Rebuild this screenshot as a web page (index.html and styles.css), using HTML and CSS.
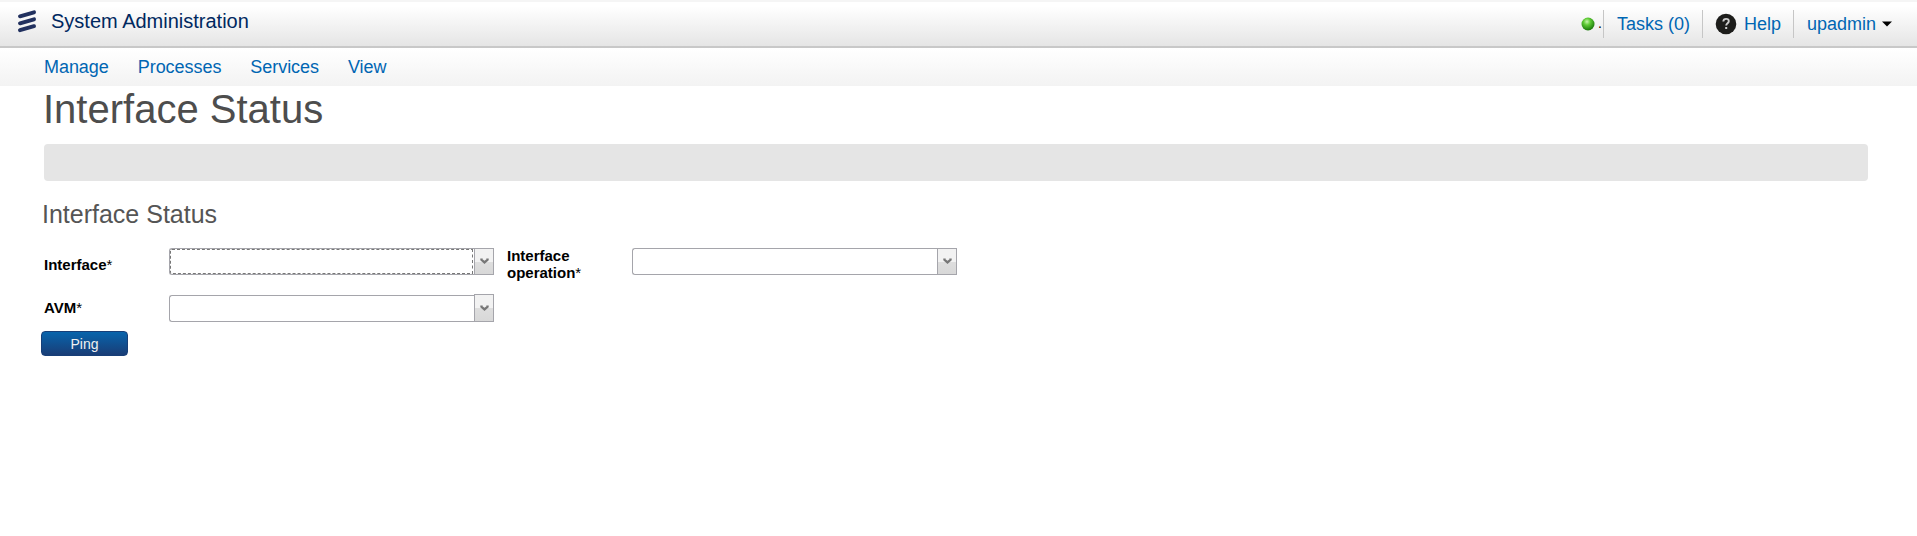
FILE: index.html
```html
<!DOCTYPE html>
<html lang="en">
<head>
<meta charset="utf-8">
<title>System Administration</title>
<link rel="stylesheet" href="styles.css">
</head>
<body>
<header class="topbar">
  <svg class="logo" width="20" height="24" viewBox="0 0 20 24"><g stroke="#22315f" stroke-width="4" stroke-linecap="round"><path d="M3 7.300 17 3.300"/><path d="M3 14.300 17 10.300"/><path d="M3 21.200 17 17.200"/></g></svg>
  <div class="brand">System Administration</div>
  <div class="tools">
    <div class="status">
      <svg width="14" height="14" viewBox="0 0 14 14"><defs><radialGradient id="led" cx=".42" cy=".32" r=".65"><stop offset="0" stop-color="#c9f5ae"/><stop offset=".4" stop-color="#5fcb35"/><stop offset="1" stop-color="#1d7d0c"/></radialGradient></defs><circle cx="7" cy="7" r="6.5" fill="url(#led)"/></svg>
      <span class="dot">.</span>
    </div>
    <a class="tool tasks">Tasks (0)</a>
    <a class="tool help"><svg width="22" height="22" viewBox="0 0 22 22"><circle cx="11" cy="11" r="10.3" fill="#1d1d1b"/><path d="M8.300 8.500c.1-1.700 1.200-2.600 2.800-2.600 1.600 0 2.700.9 2.700 2.300 0 2-2.600 2-2.600 4.300" fill="none" stroke="#ccc" stroke-width="1.900"/><rect x="10.200" y="14" width="2" height="2" fill="#ccc"/></svg><span>Help</span></a>
    <a class="tool user"><span>upadmin</span><svg width="10" height="6" viewBox="0 0 10 6"><path d="M0 .5h10L5 5.500z"/></svg></a>
  </div>
</header>
<nav class="menu"><a>Manage</a><a>Processes</a><a>Services</a><a>View</a></nav>
<main class="content">
  <h1 class="title">Interface Status</h1>
  <div class="message-bar"></div>
  <h2 class="subtitle">Interface Status</h2>
  <form class="form">
    <div class="label label-interface">Interface<span class="required">*</span></div>
    <div class="select focused"><div class="field"></div><div class="arrow"><svg width="9" height="7" viewBox="0 0 9 7"><path d="M1.500.5v1.300l3 2.700 3-2.700V.5" fill="none" stroke="#777" stroke-width="2.400"/></svg></div></div>
    <div class="label label-operation">Interface<br>operation<span class="required">*</span></div>
    <div class="select"><div class="field"></div><div class="arrow"><svg width="9" height="7" viewBox="0 0 9 7"><path d="M1.500.5v1.300l3 2.700 3-2.700V.5" fill="none" stroke="#777" stroke-width="2.400"/></svg></div></div>
    <div class="label label-avm">AVM<span class="required">*</span></div>
    <div class="select avm"><div class="field"></div><div class="arrow"><svg width="9" height="7" viewBox="0 0 9 7"><path d="M1.500.5v1.300l3 2.700 3-2.700V.5" fill="none" stroke="#777" stroke-width="2.400"/></svg></div></div>
  </form>
  <button class="ping">Ping</button>
</main>
</body>
</html>
```
FILE: styles.css
```css
* { box-sizing: border-box; }
body {
  margin: 0;
  background: #fff;
  font-family: "Liberation Sans", Arial, sans-serif;
}
svg { display: block; flex: none; }
.topbar {
  height: 48px;
  display: flex;
  align-items: flex-start;
  border-top: 2px solid #f5f5f5;
  border-bottom: 2px solid #c8c8c8;
  background: linear-gradient(#fff 10%, #e5e5e5);
  padding-left: 17px;
}
.logo { margin-top: 7px; }
.brand {
  margin: 7px 0 0 14px;
  font-size: 20px;
  line-height: 24px;
  color: #00285f;
}
.tools {
  display: flex;
  margin: 8px 0 0 auto;
  padding-right: 25px;
  height: 28px;
  font-size: 18px;
  line-height: 28px;
  color: #0066b3;
}
.status { display: flex; align-items: center; width: 22px; }
.dot { margin: -2px 0 0 3px; font-size: 14px; color: #000; }
.tool { display: flex; align-items: center; border-left: 1px solid #c6c6c6; }
.tasks { width: 99px; padding-left: 13px; }
.help { width: 91px; padding-left: 12px; }
.help span { margin-left: 7px; }
.user { width: 99px; padding-left: 13px; }
.user svg { margin-left: 6px; }
.menu {
  display: flex;
  gap: 29px;
  height: 38px;
  padding-left: 44px;
  background: linear-gradient(#fff, #f3f3f3);
  font-size: 18px;
  line-height: 38px;
  letter-spacing: -0.05px;
  color: #0066b3;
}
.content { padding: 0 49px 0 41px; }
.title {
  margin: 0;
  padding-left: 2px;
  height: 58px;
  font-size: 40px;
  line-height: 46px;
  font-weight: 400;
  color: #4d4d4d;
}
.message-bar {
  height: 37px;
  margin-left: 3px;
  border-radius: 4px;
  background: #e5e5e5;
}
.subtitle {
  margin: 18px 0 0;
  padding-left: 1px;
  height: 49px;
  font-size: 25px;
  line-height: 30px;
  font-weight: 400;
  color: #555;
}
.form {
  display: grid;
  grid-template-columns: 125px 325px 13px 125px 325px;
  grid-template-rows: 46px 37px;
  padding-left: 3px;
}
.label {
  font-size: 15px;
  line-height: 17px;
  font-weight: 700;
  color: #000;
}
.label-interface { padding-top: 8px; }
.label-operation { grid-column: 4; margin-top: -1px; }
.label-avm { padding-top: 5px; }
.required { font-weight: 400; }
.select { display: flex; height: 27px; }
.field {
  flex: 1;
  border: 1px solid #a5a5ab;
  border-right: 0;
  border-radius: 3px 0 0 3px;
}
.focused .field { outline: 1px dashed #777; outline-offset: -2px; }
.arrow {
  width: 20px;
  border: 1px solid #a5a5ab;
  background: linear-gradient(#f2f2f2 50%, #dedede 50%, #d8d8d8);
  display: flex;
  align-items: center;
  justify-content: center;
}
.avm { height: 28px; }
.avm .field { margin-top: 1px; }
.ping {
  display: block;
  width: 87px;
  height: 25px;
  border: 1px solid #173f78;
  border-radius: 4px;
  padding: 1px 0 0;
  background: linear-gradient(#0864ac, #193d76);
  font: 14px/22px "Liberation Sans", Arial, sans-serif;
  color: #f0f0f0;
}
```
